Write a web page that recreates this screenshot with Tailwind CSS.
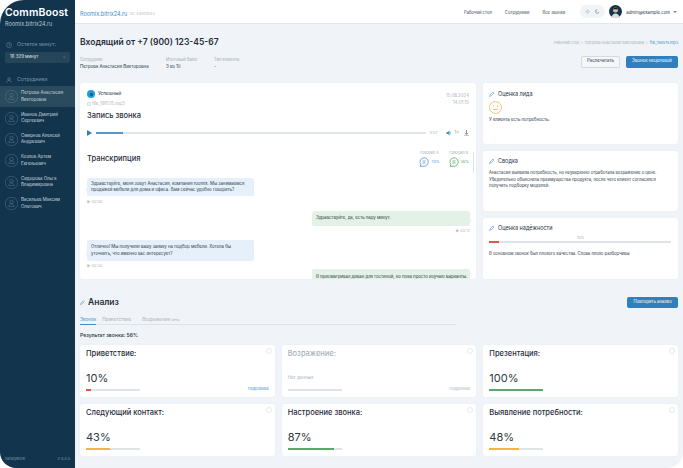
<!DOCTYPE html>
<html lang="ru">
<head>
    <meta charset="UTF-8">
    <title>CommBoost</title>
    <script src="https://cdn.jsdelivr.net/npm/@tailwindcss/browser@4"></script>
</head>
<body class="bg-white font-['Inter',sans-serif]">
<div class="flex w-[683px] h-[468px] overflow-hidden rounded-tl-[24px] rounded-bl-[16px] rounded-br-[16px]">

    <!-- sidebar -->
    <aside class="w-[75px] shrink-0 bg-[#12344d] flex flex-col text-white">
        <div class="px-[5px] pt-[6px] h-[35px]">
            <div class="text-[10.5px] leading-[14px] font-semibold tracking-[0.1px] whitespace-nowrap">CommBoost</div>
            <div class="text-[5.5px] leading-[7px] text-[#b7c6d1] mt-[1px]">Roomix.bitrix24.ru</div>
        </div>
        <div class="flex items-center gap-[3px] px-[6px] mt-[6px] h-[8px] text-[5.2px] text-[#7d97a8]">
            <svg class="w-[6px] h-[6px]" viewBox="0 0 12 12" fill="none" stroke="#7d97a8"><circle cx="6" cy="6" r="5"/><path d="M6 3v3l2 1"/></svg>
            <span class="ml-[2px]">Остаток минут:</span>
        </div>
        <div class="mx-[5px] mt-[3px] h-[11px] rounded-[2px] bg-[#254659] flex items-center justify-between px-[5px] text-[4.4px] text-[#e6edf2]">
            <span>16 329 минут</span>
            <span class="text-[#7d97a8]">›</span>
        </div>
        <div class="flex items-center gap-[3px] px-[6px] mt-[13px] h-[8px] text-[5.2px] text-[#7d97a8]">
            <svg class="w-[6px] h-[6px]" viewBox="0 0 12 12" fill="none" stroke="#7d97a8"><circle cx="6" cy="4" r="2.5"/><path d="M1.5 11c.5-3 2.2-4 4.5-4s4 1 4.5 4"/></svg>
            <span class="ml-[2px]">Сотрудники</span>
        </div>
        <div class="mt-[2px] flex flex-col text-[4.4px] leading-[6.5px] text-[#c9d5dd]">
            <div class="h-[21.4px] bg-[#2a4a5e] flex items-center gap-[3px] px-[5px]">
                <svg class="w-[13px] h-[13px] shrink-0" viewBox="0 0 26 26" fill="none" stroke="#5f7b8d"><circle cx="13" cy="13" r="12.5"/><circle cx="13" cy="10" r="3.5"/><path d="M7.5 19c.5-3.5 2.5-5 5.500-5s5 1.500 5.500 5z"/></svg>
                <span>Петрова Анастасия Викторовна</span>
            </div>
            <div class="h-[21.4px] flex items-center gap-[3px] px-[5px]">
                <svg class="w-[13px] h-[13px] shrink-0" viewBox="0 0 26 26" fill="none" stroke="#5f7b8d"><circle cx="13" cy="13" r="12.5"/><circle cx="13" cy="10" r="3.5"/><path d="M7.5 19c.5-3.5 2.5-5 5.500-5s5 1.500 5.500 5z"/></svg>
                <span>Иванов Дмитрий Сергеевич</span>
            </div>
            <div class="h-[21.4px] flex items-center gap-[3px] px-[5px]">
                <svg class="w-[13px] h-[13px] shrink-0" viewBox="0 0 26 26" fill="none" stroke="#5f7b8d"><circle cx="13" cy="13" r="12.5"/><circle cx="13" cy="10" r="3.5"/><path d="M7.5 19c.5-3.5 2.5-5 5.500-5s5 1.500 5.500 5z"/></svg>
                <span>Смирнов Алексей Андреевич</span>
            </div>
            <div class="h-[21.4px] flex items-center gap-[3px] px-[5px]">
                <svg class="w-[13px] h-[13px] shrink-0" viewBox="0 0 26 26" fill="none" stroke="#5f7b8d"><circle cx="13" cy="13" r="12.5"/><circle cx="13" cy="10" r="3.5"/><path d="M7.5 19c.5-3.5 2.5-5 5.500-5s5 1.500 5.500 5z"/></svg>
                <span>Козлов Артем Евгеньевич</span>
            </div>
            <div class="h-[21.4px] flex items-center gap-[3px] px-[5px]">
                <svg class="w-[13px] h-[13px] shrink-0" viewBox="0 0 26 26" fill="none" stroke="#5f7b8d"><circle cx="13" cy="13" r="12.5"/><circle cx="13" cy="10" r="3.5"/><path d="M7.5 19c.5-3.5 2.5-5 5.500-5s5 1.500 5.500 5z"/></svg>
                <span>Сидорова Ольга Владимировна</span>
            </div>
            <div class="h-[21.4px] flex items-center gap-[3px] px-[5px]">
                <svg class="w-[13px] h-[13px] shrink-0" viewBox="0 0 26 26" fill="none" stroke="#5f7b8d"><circle cx="13" cy="13" r="12.5"/><circle cx="13" cy="10" r="3.5"/><path d="M7.5 19c.5-3.5 2.5-5 5.500-5s5 1.500 5.500 5z"/></svg>
                <span>Васильев Максим Олегович</span>
            </div>
        </div>
        <div class="mt-auto h-[12px] px-[5px] flex justify-between text-[3.8px] leading-[6px] text-[#7d97a8]">
            <span>handywork</span><span>v 0.4.5</span>
        </div>
    </aside>

    <div class="flex-1 min-w-0 flex flex-col bg-[#f0f4f8]">
        <!-- top bar -->
        <header class="h-[24px] shrink-0 bg-white border-b border-[#e3e7eb] flex items-center pl-[5px] pr-[6px] leading-[8px]">
            <span class="mt-[5px] text-[5.5px] leading-[8px] text-[#3a8fcb]">Roomix.bitrix24.ru</span>
            <span class="mt-[5px] ml-[3px] text-[3.800px] leading-[8px] text-[#b5bdc5]">ID: 44912943</span>
            <nav class="mt-[3px] ml-auto flex gap-[13px] text-[4.200px] leading-[8px] text-[#3c4a57]">
                <span>Рабочий стол</span><span>Сотрудники</span><span>Все звонки</span>
            </nav>
            <div class="ml-[15px] w-[25px] h-[13px] rounded-full bg-[#f0f4f8] flex items-center justify-between px-[5px]">
                <svg class="w-[5px] h-[5px]" viewBox="0 0 10 10" fill="none" stroke="#9aa5ae"><circle cx="5" cy="5" r="2.500"/><path d="M5 0v1.500M5 8.500V10M0 5h1.500M8.500 5H10"/></svg>
                <svg class="w-[5px] h-[5px]" viewBox="0 0 10 10" fill="none" stroke="#7f8b95"><path d="M8 7A4 4 0 1 1 4 1a3.500 3.500 0 0 0 4 6z"/></svg>
            </div>
            <svg class="ml-[4px] w-[13px] h-[13px] shrink-0" viewBox="0 0 26 26"><circle cx="13" cy="13" r="13" fill="#12344d"/><circle cx="13" cy="10" r="5" fill="#d8b8a4"/><path d="M8 9c0-5 10-5 10 0-3-1-7-1-10 0z" fill="#1a1a1a"/><path d="M5 26c0-6 4-9 8-9s8 3 8 9z" fill="#dcdcdc"/></svg>
            <span class="mt-[2px] ml-[4px] text-[4.300px] leading-[8px] text-[#24323f]">admin@example.com</span>
            <span class="ml-[3px] border-x-[2px] border-t-[2.500px] border-x-transparent border-t-[#7f8b95]"></span>
        </header>

        <main class="flex-1 min-h-0 px-[5px] pt-[12px]">
            <div class="flex items-start justify-between h-[14px]">
                <h1 class="text-[8.500px] leading-[13px] font-semibold text-[#1f2d3a]">Входящий от +7 (900) 123-45-67</h1>
                <div class="text-[3.800px] leading-[13px] text-[#a8b1b9]">Рабочий стол &nbsp;/&nbsp; Петрова Анастасия Викторовна &nbsp;/&nbsp; <span class="text-[#3a8fcb]">file_196515.mp3</span></div>
            </div>
            <div class="flex items-center h-[20px] mt-[3px]">
                <div class="w-[86px]">
                    <div class="text-[4.200px] leading-[6px] text-[#a0a9b2]">Сотрудник:</div>
                    <div class="text-[4.400px] leading-[7px] text-[#26343f]">Петрова Анастасия Викторовна</div>
                </div>
                <div class="w-[48px]">
                    <div class="text-[4.200px] leading-[6px] text-[#a0a9b2]">Итоговый балл:</div>
                    <div class="text-[4.400px] leading-[7px] text-[#26343f]">3 из 10</div>
                </div>
                <div>
                    <div class="text-[4.200px] leading-[6px] text-[#a0a9b2]">Тип клиента:</div>
                    <div class="text-[4.400px] leading-[7px] text-[#26343f]">-</div>
                </div>
                <button class="ml-auto -mt-[3px] w-[39px] h-[12px] rounded-[2px] border border-[#d3dae0] bg-[#f5f7f9] text-[4.400px] text-[#26343f]">Распечатать</button>
                <button class="ml-[6px] -mt-[3px] w-[52px] h-[12px] rounded-[2px] bg-[#2f80bd] text-[4.400px] text-white">Звонок нецелевой</button>
            </div>

            <div class="flex gap-[7px] mt-[10px]">
                <!-- call card -->
                <section class="relative w-[396px] h-[196px] rounded-[3px] bg-white overflow-hidden px-[7px] pt-[7px] shadow-[0_0_2px_#e6ebef]">
                    <div class="flex justify-between">
                        <div>
                            <div class="flex items-center gap-[3px] text-[4.600px] text-[#26343f]">
                                <span class="w-[8px] h-[8px] rounded-full bg-[#1ba0dc] flex items-center justify-center">
                                    <span class="w-[3px] h-[3px] rounded-[1px] bg-[#0c5f8c]"></span>
                                </span>
                                Успешный
                            </div>
                            <div class="flex items-center gap-[1px] text-[4.400px] leading-[7px] mt-[2px] text-[#a8b1b9]">
                                <svg class="w-[4px] h-[4px]" viewBox="0 0 8 8" fill="none" stroke="#a8b1b9"><path d="M1.500.5h3.500l1.500 1.500v5.500h-5z"/></svg>
                                file_196515.mp3
                            </div>
                        </div>
                        <div class="text-right text-[4.400px] leading-[7px] text-[#a8b1b9] pt-[2px]">15.08.2024<br>14:01:15</div>
                    </div>
                    <h2 class="text-[7.500px] leading-[11px] font-medium text-[#1f2d3a] mt-[3px]">Запись звонка</h2>
                    <div class="flex items-center h-[8px] mt-[8px]">
                        <span class="border-y-[3.500px] border-l-[5px] border-y-transparent border-l-[#2f80bd]"></span>
                        <div class="ml-[4px] w-[331px] h-[2px] bg-[#dfe4e9]"><div class="w-[27px] h-[2px] bg-[#4a9ad4]"></div></div>
                        <span class="ml-[4px] text-[3.800px] text-[#a8b1b9]">5:57</span>
                        <svg class="ml-[8px] w-[6px] h-[6px]" viewBox="0 0 12 12" fill="#3a8fcb"><path d="M1 4h3l3-3v10L4 8H1z"/><path d="M8.500 3.500a3.500 3.500 0 0 1 0 5" fill="none" stroke="#3a8fcb"/></svg>
                        <span class="ml-[3px] text-[4.200px] text-[#8b96a0]">1×</span>
                        <svg class="ml-[5px] w-[5px] h-[6px]" viewBox="0 0 10 12" fill="#8b96a0"><path d="M4 0h2v6h3L5 10 1 6h3zM0 11h10v1H0z"/></svg>
                    </div>
                    <div class="flex justify-between items-start mt-[13px]">
                        <h2 class="text-[7.500px] leading-[11px] font-medium text-[#1f2d3a] mt-[3px]">Транскрипция</h2>
                        <div class="flex gap-[9px] text-[3.800px] text-[#a8b1b9]">
                            <div>
                                <div class="leading-[6px] text-center">Говорил А</div>
                                <div class="flex items-center gap-[2px] mt-[1px] text-[#5b9bd8]">
                                    <svg class="w-[10px] h-[10px]" viewBox="0 0 20 20" fill="none" stroke="#4f8fd6" stroke-width="1.500"><path d="M10 1.500a8.500 8.500 0 0 1 0 17H2l2-3a8.500 8.500 0 0 1 6-14z"/><path d="M7 8h6M7 12h6"/></svg>
                                    70%
                                </div>
                            </div>
                            <div>
                                <div class="leading-[6px] text-center">Говорил В</div>
                                <div class="flex items-center gap-[2px] mt-[1px] text-[#57a866]">
                                    <svg class="w-[10px] h-[10px]" viewBox="0 0 20 20" fill="none" stroke="#4aa05b" stroke-width="1.500"><path d="M10 1.500a8.500 8.500 0 0 1 0 17H2l2-3a8.500 8.500 0 0 1 6-14z"/><path d="M7 8h6M7 12h6"/></svg>
                                    30%
                                </div>
                            </div>
                        </div>
                    </div>
                    <div class="absolute right-[2px] top-[69px] w-[1.500px] h-[21px] bg-[#dfe4e9]"></div>
                    <div class="mt-[11px] text-[4.300px] leading-[6.500px] text-[#2c3a46]">
                        <div class="relative w-[167px] h-[18px] rounded-[2px] bg-[#e5f0fa] px-[4px] py-[2.500px]">
                            <span class="absolute -left-[1px] bottom-[5px] w-[3px] h-[3px] rotate-45 bg-[#e5f0fa]"></span>
                            Здравствуйте, меня зовут Анастасия, компания roomix. Мы занимаемся продажей мебели для дома и офиса. Вам сейчас удобно говорить?
                        </div>
                        <div class="mt-[2px] text-[3.800px] leading-[7px] text-[#b5bdc5]">▶ 00:00</div>
                        <div class="relative ml-[225px] w-[158px] h-[15px] rounded-[2px] bg-[#e4f1e7] px-[4px] flex items-center mt-[6px]">
                            <span class="absolute -right-[1px] bottom-[4px] w-[3px] h-[3px] rotate-45 bg-[#e4f1e7]"></span>
                            Здравствуйте, да, есть пару минут.
                        </div>
                        <div class="ml-[225px] w-[158px] text-right mt-[1px] text-[3.800px] leading-[7px] text-[#b5bdc5]">▶ 00:12</div>
                        <div class="relative w-[167px] h-[21px] rounded-[2px] bg-[#e5f0fa] px-[4px] py-[4px] mt-[6px]">
                            <span class="absolute -left-[1px] bottom-[5px] w-[3px] h-[3px] rotate-45 bg-[#e5f0fa]"></span>
                            Отлично! Мы получили вашу заявку на подбор мебели. Хотела бы уточнить, что именно вас интересует?
                        </div>
                        <div class="mt-[1px] text-[3.800px] leading-[7px] text-[#b5bdc5]">▶ 00:30</div>
                        <div class="ml-[225px] w-[158px] h-[21px] rounded-[2px] bg-[#e4f1e7] px-[4px] py-[5px] whitespace-nowrap">Я присматривал диван для гостиной, но пока просто изучаю варианты.</div>
                    </div>
                </section>

                <!-- right column -->
                <div class="flex-1 flex flex-col gap-[7px]">
                    <section class="h-[61px] rounded-[3px] bg-white px-[6px] pt-[7px] shadow-[0_0_2px_#e6ebef]">
                        <div class="flex items-center gap-[3px] h-[8px] text-[5.500px] text-[#26343f]">
                            <svg class="w-[6px] h-[6px]" viewBox="0 0 12 12" fill="none" stroke="#6fb0e0" stroke-width="1.500"><path d="M1 11l1-3 6-6 2 2-6 6z"/></svg>Оценка лида
                        </div>
                        <svg class="w-[13px] h-[13px] mt-[3px]" viewBox="0 0 26 26" fill="none" stroke="#f2b544" stroke-width="1.500"><circle cx="13" cy="13" r="12"/><circle cx="9" cy="10" r=".7"/><circle cx="17" cy="10" r=".7"/><path d="M8 17h10"/></svg>
                        <div class="text-[4.300px] leading-[8px] mt-[2px] text-[#26343f]">У клиента есть потребность.</div>
                    </section>
                    <section class="h-[60px] rounded-[3px] bg-white px-[6px] pt-[6px] shadow-[0_0_2px_#e6ebef]">
                        <div class="flex items-center gap-[3px] h-[8px] text-[5.500px] text-[#26343f]">
                            <svg class="w-[6px] h-[6px]" viewBox="0 0 12 12" fill="none" stroke="#6fb0e0" stroke-width="1.500"><path d="M1 11l1-3 6-6 2 2-6 6z"/></svg>Сводка
                        </div>
                        <div class="text-[4.200px] leading-[6.500px] mt-[5px] text-[#2c3a46]">Анастасия выявила потребность, но неуверенно отработала возражение о цене. Убедительно объяснила преимущества продукта, после чего клиент согласился получить подборку моделей.</div>
                    </section>
                    <section class="h-[61px] rounded-[3px] bg-white px-[6px] pt-[6px] shadow-[0_0_2px_#e6ebef]">
                        <div class="flex items-center gap-[3px] h-[8px] text-[5.500px] text-[#26343f]">
                            <svg class="w-[6px] h-[6px]" viewBox="0 0 12 12" fill="none" stroke="#6fb0e0" stroke-width="1.500"><path d="M1 11l1-3 6-6 2 2-6 6z"/></svg>Оценка надёжности
                        </div>
                        <div class="text-center text-[3.800px] leading-[5px] mt-[3px] text-[#a8b1b9]">10%</div>
                        <div class="h-[1.500px] bg-[#dfe2e6] mt-[1px] mr-[1px]"><div class="w-[10px] h-[1.500px] bg-[#e0574f]"></div></div>
                        <div class="text-[4.200px] leading-[8px] mt-[7px] text-[#2c3a46]">В основном звонок был плохого качества. Слова плохо разборчивы</div>
                    </section>
                </div>
            </div>

            <!-- analysis -->
            <div class="flex items-center justify-between mt-[17px] h-[12px]">
                <div class="flex items-center gap-[3px] text-[8.500px] font-semibold text-[#1f2d3a]">
                    <svg class="w-[5px] h-[5px]" viewBox="0 0 12 12" fill="none" stroke="#6fb0e0" stroke-width="2"><path d="M1 11l1-3 6-6 2 2-6 6z"/></svg>Анализ
                </div>
                <button class="w-[51px] h-[11px] rounded-[2px] bg-[#2f80bd] text-[4.300px] text-white">Повторить анализ</button>
            </div>
            <div class="flex w-[376px] mt-[8px] h-[9px] border-b border-[#dfe3e8] text-[4.600px] leading-[8px] text-[#a8b1b9]">
                <span class="h-[9px] border-b border-[#3a8fcb] text-[#3a8fcb]">Звонок</span>
                <span class="ml-[6px]">Приветствие</span>
                <span class="ml-[11px]">Возражения <span class="text-[3px]">(beta)</span></span>
            </div>
            <div class="mt-[7px] h-[6px] leading-[6px] text-[5.100px] font-medium text-[#26343f]">Результат звонка: 56%</div>

            <div class="grid grid-cols-3 gap-[7px] mt-[7px]">
                <div class="relative h-[52px] rounded-[3px] bg-white px-[6px] pt-[4px] shadow-[0_0_2px_#e6ebef]">
                    <span class="absolute right-[3px] top-[3px] w-[6px] h-[6px] rounded-full border border-[#e6e9ed]"></span>
                    <div class="text-[7.500px] leading-[10px] font-medium text-[#1f2d3a]">Приветствие:</div>
                    <div class="text-[11px] leading-[14px] mt-[12px] text-[#2c3a46]">10%</div>
                    <div class="w-[54px] h-[2px] bg-[#dfe4e9] mt-[4px]"><div class="w-[5px] h-[2px] bg-[#e0574f]"></div></div>
                    <span class="absolute right-[6px] bottom-[5px] text-[3.800px] leading-[6px] text-[#3a8fcb]">Подробнее</span>
                </div>
                <div class="relative h-[52px] rounded-[3px] bg-white px-[6px] pt-[4px] shadow-[0_0_2px_#e6ebef]">
                    <span class="absolute right-[3px] top-[3px] w-[6px] h-[6px] rounded-full border border-[#e6e9ed]"></span>
                    <div class="text-[7.500px] leading-[10px] font-medium text-[#a8b1b9]">Возражение:</div>
                    <div class="text-[4.500px] leading-[14px] mt-[12px] text-[#a8b1b9]">Нет данных</div>
                    <div class="w-[54px] h-[2px] bg-[#dfe4e9] mt-[4px]"></div>
                    <span class="absolute right-[6px] bottom-[5px] text-[3.800px] leading-[6px] text-[#a8b1b9]">Подробнее</span>
                </div>
                <div class="relative h-[52px] rounded-[3px] bg-white px-[6px] pt-[4px] shadow-[0_0_2px_#e6ebef]">
                    <span class="absolute right-[3px] top-[3px] w-[6px] h-[6px] rounded-full border border-[#e6e9ed]"></span>
                    <div class="text-[7.500px] leading-[10px] font-medium text-[#1f2d3a]">Презентация:</div>
                    <div class="text-[11px] leading-[14px] mt-[12px] text-[#2c3a46]">100%</div>
                    <div class="w-[54px] h-[2px] bg-[#dfe4e9] mt-[4px]"><div class="w-full h-[2px] bg-[#5aa86b]"></div></div>
                </div>
                <div class="relative h-[52px] rounded-[3px] bg-white px-[6px] pt-[4px] shadow-[0_0_2px_#e6ebef]">
                    <span class="absolute right-[3px] top-[3px] w-[6px] h-[6px] rounded-full border border-[#e6e9ed]"></span>
                    <div class="text-[7.500px] leading-[10px] font-medium text-[#1f2d3a]">Следующий контакт:</div>
                    <div class="text-[11px] leading-[14px] mt-[12px] text-[#2c3a46]">43%</div>
                    <div class="w-[54px] h-[2px] bg-[#dfe4e9] mt-[4px]"><div class="w-[24px] h-[2px] bg-[#f2b544]"></div></div>
                </div>
                <div class="relative h-[52px] rounded-[3px] bg-white px-[6px] pt-[4px] shadow-[0_0_2px_#e6ebef]">
                    <span class="absolute right-[3px] top-[3px] w-[6px] h-[6px] rounded-full border border-[#e6e9ed]"></span>
                    <div class="text-[7.500px] leading-[10px] font-medium text-[#1f2d3a]">Настроение звонка:</div>
                    <div class="text-[11px] leading-[14px] mt-[12px] text-[#2c3a46]">87%</div>
                    <div class="w-[54px] h-[2px] bg-[#dfe4e9] mt-[4px]"><div class="w-[46px] h-[2px] bg-[#5aa86b]"></div></div>
                </div>
                <div class="relative h-[52px] rounded-[3px] bg-white px-[6px] pt-[4px] shadow-[0_0_2px_#e6ebef]">
                    <span class="absolute right-[3px] top-[3px] w-[6px] h-[6px] rounded-full border border-[#e6e9ed]"></span>
                    <div class="text-[7.500px] leading-[10px] font-medium text-[#1f2d3a]">Выявление потребности:</div>
                    <div class="text-[11px] leading-[14px] mt-[12px] text-[#2c3a46]">48%</div>
                    <div class="w-[54px] h-[2px] bg-[#dfe4e9] mt-[4px]"><div class="w-[30px] h-[2px] bg-[#f2b544]"></div></div>
                </div>
            </div>
        </main>
    </div>
</div>
</body>
</html>
